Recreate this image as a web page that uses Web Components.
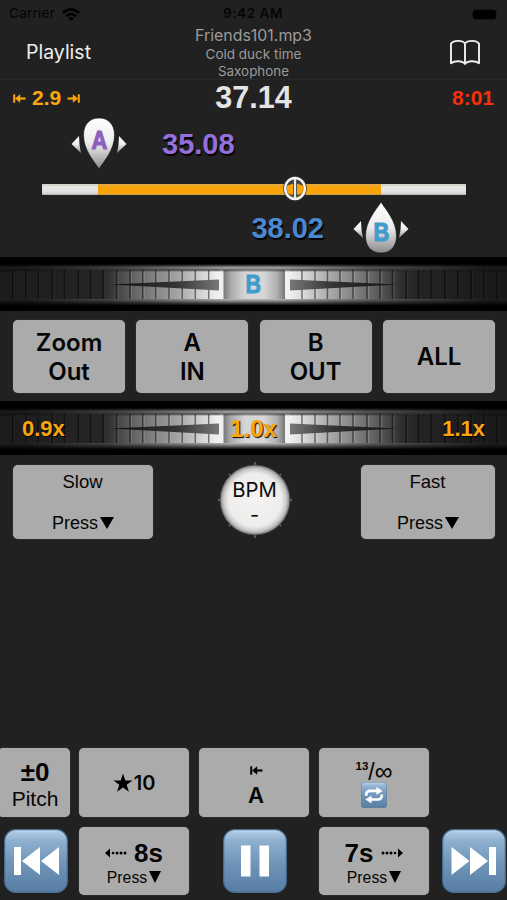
<!DOCTYPE html>
<html lang="en"><head><meta charset="utf-8"><title>Playlist</title>
<style>
html,body{margin:0;background:#212121}
body{width:507px;height:900px;overflow:hidden}
</style></head><body>
<music-player></music-player>
<script>
const define=(name,html)=>customElements.define(name,class extends HTMLElement{
  connectedCallback(){
    if(this.shadowRoot)return;
    const t=document.createElement('template');
    t.innerHTML=typeof html==='function'?html(this):html;
    this.attachShadow({mode:'open'}).append(t.content.cloneNode(true));
  }
});

/* A line of text with its own size, weight and tracking */
define('text-line',el=>`<style>
:host{display:block;white-space:pre;line-height:1;text-align:center;
font-family:${el.hasAttribute('ui')?'Inter,':''}"Liberation Sans",sans-serif;
font-size:${el.getAttribute('size')}px;font-weight:${el.getAttribute('weight')||400};
letter-spacing:${el.getAttribute('track')||0}px}
</style><slot></slot>`);

define('status-bar',`<style>
:host{display:grid;grid-template-columns:1fr auto 1fr;align-items:center;height:27px;box-sizing:border-box;padding:1px 10px 0 9px;color:#050505}
.l{display:flex;align-items:center;gap:7px}.r{display:flex;justify-content:flex-end}
.bat{width:23px;height:9px;border-radius:3px;background:#000;box-shadow:0 0 2px #000;margin-right:1px}
</style><div class="l"><text-line ui size="13.6" track=".2">Carrier</text-line>
<svg width="18" height="13" viewBox="0 0 18 13"><g fill="none" stroke="#000" stroke-width="2.6"><path d="M1 5Q9-2.2 17 5"/><path d="M4 8.2Q9 3.8 14 8.2"/></g><path d="M9 13L6.2 10Q9 7.8 11.8 10Z"/></svg></div>
<text-line ui size="13.6" weight="600" track=".5">9:42 AM</text-line>
<div class="r"><div class="bat"></div></div>`);

define('nav-bar',`<style>
:host{display:grid;grid-template-columns:1fr auto 1fr;height:52px;border-bottom:1px solid #292929;color:#eee}
.play{justify-self:start;padding:16px 0 0 26px}
.mid{color:#9b9b9b;display:flex;flex-direction:column;align-items:center}
.mid text-line:nth-child(1){margin-top:1px}.mid text-line:nth-child(2){margin-top:4px}.mid text-line:nth-child(3){margin-top:4px}
.book{justify-self:end;padding:12px 26px 0 0}
</style><text-line class="play" ui size="19.5">Playlist</text-line>
<div class="mid"><text-line ui size="15.9">Friends101.mp3</text-line><text-line ui size="13.5">Cold duck time</text-line><text-line ui size="13.4">Saxophone</text-line></div>
<svg class="book" width="32" height="27" viewBox="0 0 32 27" fill="none" stroke="#f0f0f0" stroke-width="1.9" stroke-linejoin="round"><path d="M16 4.500C13.500 1.300 5 .8 2 4.500V24.200C5.500 21.500 13.500 21.500 16 25C18.500 21.500 26.500 21.500 30 24.200V4.500C27 .8 18.500 1.300 16 4.500ZM16 4.500V25"/></svg>`);

define('edge-arrow',el=>{const f=el.getAttribute('dir')==='right'?'transform="matrix(-1 0 0 1 13 0)"':'';
return `<style>:host{display:block}svg{display:block}</style><svg width="13" height="9" viewBox="0 0 13 9"><g ${f} fill="none" stroke="currentColor"><path d="M1.200.3V8.700" stroke-width="2"/><path d="M4 4.500H12.500" stroke-width="2.200"/><path d="M7.200.3L2 4.500L7.200 8.700Z" fill="currentColor" stroke="none"/></g></svg>`});

define('time-row',`<style>
:host{display:grid;grid-template-columns:1fr auto 1fr;align-items:center;height:36px;box-sizing:border-box;padding-bottom:2px}
.a{display:flex;align-items:center;gap:6px;color:#f9a60f;padding-left:13px}
.a edge-arrow{margin-top:3px}
.m{color:#e4e4e4}.r{color:#f5310d;justify-self:end;padding-right:13px}
</style><div class="a"><edge-arrow></edge-arrow><text-line size="21" weight="700">2.9</text-line><edge-arrow dir="right"></edge-arrow></div>
<text-line class="m" size="30.500" weight="700">37.14</text-line><text-line class="r" size="21" weight="700">8:01</text-line>`);

/* Drop-shaped loop marker; flip turns the tip upwards */
define('loop-pin',el=>{const up=el.hasAttribute('flip');return `<style>
:host{display:grid;width:56px;height:54px;place-items:center}
svg,text-line{grid-area:1/1}
text-line{color:${up?'#3f9ccb':'#8d60bd'};margin-top:${up?'8px':'-6px'};transform:scaleX(.84);-webkit-text-stroke:1.200px}
</style><svg width="56" height="54" viewBox="0 0 56 54"><defs><linearGradient id="g" x2="0" y2="1"><stop stop-color="#fff"/><stop offset=".5" stop-color="#ececec"/><stop offset="1" stop-color="#8a8a8a"/></linearGradient></defs>
<path fill="url(#g)" stroke="#111" stroke-width=".6" d="${up?'M28 1C33 9 43.500 20 43.500 35C43.500 46 37 52 28 52C19 52 12.500 46 12.500 35C12.500 20 23 9 28 1Z':'M28 53C33 45 43.500 34 43.500 19C43.500 8 37 2 28 2C19 2 12.500 8 12.500 19C12.500 34 23 45 28 53Z'}"/>
<path fill="url(#g)" d="M8 20L.5 28L10 37Q8 29 8 20ZM48 20L55.500 28L46 37Q48 29 48 20Z"/></svg><text-line size="26" weight="700">${up?'B':'A'}</text-line>`});

define('loop-slider',`<style>
:host{display:flex;flex-direction:column;height:142px}
.top{display:flex;padding-left:71px;height:68px;align-items:flex-start}
.top text-line{color:#9370db;margin:14px 0 0 35px;text-shadow:1px 2px 1px #000}
.track{margin:0 41px 0 42px;height:11px;display:grid;background:linear-gradient(90deg,transparent 13.200%,#faa307 13.200% 80%,transparent 80%),linear-gradient(#e8e8e8,#e4e4e4 60%,#cfcfcf);box-shadow:inset 0 2px 1px #bdb39566,inset 0 -1px 1px #9998}
.track svg{margin:-9px 0 0 240px}
.bot{display:flex;justify-content:flex-end;padding-right:98px}
.bot text-line{color:#4a88d1;margin:19px 29px 0 0;text-shadow:1px 2px 1px #000}
.bot loop-pin{margin-top:6px}
</style><div class="top"><loop-pin></loop-pin><text-line size="29" weight="700">35.08</text-line></div>
<div class="track"><svg width="26" height="27" viewBox="0 0 26 27"><ellipse cx="13" cy="13.500" rx="10" ry="11" fill="#faa307" stroke="#333" stroke-width="3.400"/><path d="M4.500 11Q8 3 13 3Q18 3 21.500 11Q17 8.500 13 8.500Q9 8.500 4.500 11ZM6 18.500Q13 21 20 18.500L13 24Z" fill="#444"/><ellipse cx="13" cy="13.500" rx="9.800" ry="10.600" fill="none" stroke="#f4f4f4" stroke-width="2.500"/><path d="M13 5V22" stroke="#555" stroke-width="4"/><path d="M13 4V23" stroke="#e8e8e8" stroke-width="2"/></svg></div>
<div class="bot"><text-line size="29" weight="700">38.02</text-line><loop-pin flip></loop-pin></div>`);

/* Ribbed thumb wheel with a lit centre */
define('jog-dial',()=>{
 const xs=[12.700,26,38.300,52,64.500,78.300,90.700,103,116.700,130,142.700,155.700,169,182.300,195.300,208.700,302,315,327.500,340,353,367,380,392.500,406,418.500,431.500,445,458,471,484,497];
 const ticks=xs.map(x=>{const lit=x>110&&x<395;return `<path d="M${x} 13V42" stroke="#050505" stroke-opacity="${lit?.5:.55}" stroke-width="1.500"/><path d="M${x+1.500} 14V42" stroke="#fff" stroke-opacity="${lit?.15:.03}"/>`}).join('');
 return `<style>
:host{display:grid;height:54px;grid-template-columns:100%}
svg,.lab{grid-area:1/1}svg{display:block}
.lab{display:grid;grid-template-columns:1fr 1fr 1fr;align-items:center;padding:2px 22px 0 22px}
</style><svg width="507" height="54" viewBox="0 0 507 54"><defs>
<linearGradient id="w" gradientUnits="userSpaceOnUse" x1="0" x2="507" y1="0" y2="0"><stop stop-color="#1b1b1b"/><stop offset=".2" stop-color="#262626"/><stop offset=".215" stop-color="#333"/><stop offset=".27" stop-color="#696969"/><stop offset=".35" stop-color="#a4a4a4"/><stop offset=".43" stop-color="#f2f2f2"/><stop offset=".57" stop-color="#f2f2f2"/><stop offset=".65" stop-color="#a9a9a9"/><stop offset=".73" stop-color="#696969"/><stop offset=".79" stop-color="#303030"/><stop offset=".83" stop-color="#232323"/><stop offset="1" stop-color="#181818"/></linearGradient>
<linearGradient id="h" x2="1" y2="0"><stop offset=".05" stop-color="#222"/><stop offset=".22" stop-color="#505050"/><stop offset=".45" stop-color="#c4c4c4"/><stop offset=".55" stop-color="#c4c4c4"/><stop offset=".75" stop-color="#606060"/><stop offset=".96" stop-color="#222"/></linearGradient>
<linearGradient id="v" x2="0" y2="1"><stop stop-color="#000"/><stop offset=".13" stop-color="#000"/><stop offset=".2" stop-color="#000" stop-opacity=".15"/><stop offset=".24" stop-color="#000" stop-opacity=".5"/><stop offset=".28" stop-color="#000" stop-opacity="0"/><stop offset=".77" stop-color="#000" stop-opacity="0"/><stop offset=".8" stop-color="#000" stop-opacity=".2"/><stop offset=".9" stop-color="#000"/></linearGradient>
<linearGradient id="c" x2="1" y2="0"><stop stop-color="#777"/><stop offset=".12" stop-color="#aaa"/><stop offset=".35" stop-color="#d6d6d6"/><stop offset=".65" stop-color="#d6d6d6"/><stop offset=".87" stop-color="#b0b0b0"/><stop offset="1" stop-color="#777"/></linearGradient>
<linearGradient id="a" x2="1" y2="0"><stop stop-color="#111"/><stop offset=".6" stop-color="#333"/><stop offset="1" stop-color="#777"/></linearGradient>
<linearGradient id="b" x2="1" y2="0"><stop stop-color="#777"/><stop offset=".4" stop-color="#333"/><stop offset="1" stop-color="#111"/></linearGradient></defs>
<rect width="507" height="54" fill="url(#h)"/><rect y="14" width="507" height="28" fill="url(#w)"/>${ticks}
<path d="M110 27.500L219 22.500V33.500Z" fill="url(#a)"/><path d="M397 27.500L290 22.500V33.500Z" fill="url(#b)"/>
<path d="M219.500 13H223.500V42H219.500ZM285 13H289.500V42H285Z" fill="#f0f0f0"/><rect x="223.500" y="13" width="61.500" height="29" fill="url(#c)"/>
<rect width="507" height="54" fill="url(#v)"/></svg><div class="lab"><slot name="l"><span></span></slot><slot name="c"></slot><slot name="r"></slot></div>`});

define('pad-button',`<style>
:host{display:flex;flex-direction:column;align-items:center;justify-content:center;background:#ababab;border-radius:5px;color:#050505;box-shadow:0 0 1px #777;box-sizing:border-box}
</style><slot></slot>`);

define('bpm-knob',`<style>
:host{display:grid;width:76px;height:78px}
svg,.t{grid-area:1/1}.t{display:flex;flex-direction:column;align-items:center;color:#0b0b0b;padding-top:19px;gap:5px}
</style><svg width="76" height="78" viewBox="0 0 76 78"><defs><radialGradient id="k"><stop stop-color="#f4f3f1"/><stop offset=".76" stop-color="#eeedec"/><stop offset=".9" stop-color="#c7c7c7"/><stop offset="1" stop-color="#777"/></radialGradient></defs>
<g stroke="#777" stroke-width="1.300"><path d="M38 1V77M1 39H75M12 13L64 65M64 13L12 65"/></g><circle cx="38" cy="39" r="35" fill="url(#k)" stroke="#444" stroke-width=".8"/></svg>
<div class="t"><text-line ui size="20.300">BPM</text-line><text-line ui size="20">-</text-line></div>`);

const art={
 prev:'<path d="M10 18H17V46H10ZM36 18V46L18 32ZM55 18V46L37 32Z"/>',
 next:'<path d="M54 18H47V46H54ZM28 18V46L46 32ZM9.500 18V46L27.500 32Z"/>',
 pause:'<path d="M18 16.500H27.500V47.500H18ZM36.500 16.500H46V47.500H36.500Z"/>',
 loop:'<path d="M13 34V31Q13 22 23 22H42" fill="none" stroke="#fff" stroke-width="6.500"/><path d="M38 12L53 22L38 32ZM26 33L11 43L26 53Z"/><path d="M51 31V34Q51 43 41 43H22" fill="none" stroke="#fff" stroke-width="6.500"/>'};
define('media-tile',el=>{const s=el.getAttribute('size')||64;return `<style>:host{display:block}svg{display:block}</style>
<svg width="${s}" height="${s}" viewBox="0 0 64 64"><defs><linearGradient id="t" x2="0" y2="1"><stop stop-color="#b5d0e8"/><stop offset=".18" stop-color="#8fb0cf"/><stop offset=".5" stop-color="#7297bb"/><stop offset="1" stop-color="#587da3"/></linearGradient></defs><rect x=".7" y=".7" width="62.600" height="62.600" rx="${s<40?7:11}" fill="url(#t)" stroke="#496e92" stroke-width="1.200"/><path d="M10 2.500H54" stroke="#c3dcf1" stroke-width="1.500" stroke-linecap="round" opacity=".5"/><g fill="#fff">${art[el.getAttribute('icon')]}</g></svg>`});

define('dotted-arrow',el=>`<style>:host{display:block}svg{display:block}</style><svg width="22" height="10" viewBox="0 0 22 10"><g ${el.getAttribute('dir')==='right'?'transform="matrix(-1 0 0 1 22 0)"':''}><path d="M0 5L5 .5V9.500Z"/><circle cx="8" cy="5" r="1.300"/><circle cx="12" cy="5" r="1.500"/><circle cx="16" cy="5" r="1.500"/><circle cx="20" cy="5" r="1.500"/></g></svg>`);

define('press-label',el=>`<style>:host{display:flex;align-items:center;line-height:1}svg{margin-left:2px}</style><text-line size="${el.getAttribute('size')}">Press</text-line><svg width="${el.getAttribute('tri')}" height="12" viewBox="0 0 14 12" preserveAspectRatio="none"><path d="M0 0H14L7 12Z"/></svg>`);

define('music-player',`<style>
:host{display:flex;flex-direction:column;width:507px;height:900px;background:#212121}
loop-slider{height:141px}
.four{display:grid;grid-template-columns:repeat(4,112px);justify-content:space-between;padding:9px 12px 8px 13px;height:73px}
.four pad-button{padding-top:1px}
.four text-line+text-line{margin-top:5px}
.two{display:flex;justify-content:space-between;align-items:flex-start;padding:10px 12px 0 13px}
.two pad-button{height:74px;padding-top:1px}.slow{width:140px}.fast{width:134px}
bpm-knob{margin:-4px 5px 0 0}
.c1{margin-bottom:23px;margin-right:1px}
.low{margin-top:auto;display:flex;gap:10px;height:69px;margin-bottom:10px}
.low pad-button{width:110px}
.low .pitch{width:70px;margin-right:-1px;border-radius:2px 5px 5px 2px;padding-top:2px}
.foot{display:flex;height:68px;margin-bottom:5px;padding:0 1px 0 4px}
.foot pad-button{width:110px;padding-top:3px}.foot press-label{margin-top:4px}
.foot media-tile{margin-top:2px}
.s1{flex:0 0 11px}.s2{flex:0 0 34px}.s3{flex:0 0 32px}.s4{flex:0 0 13px}
.row{display:flex;align-items:center}
.count{display:flex;align-items:center;height:22px}
</style>
<status-bar></status-bar><nav-bar></nav-bar><time-row></time-row><loop-slider></loop-slider>
<jog-dial><text-line slot="c" size="25" weight="700" style="color:#3f9ccb;-webkit-text-stroke:1px;transform:scaleX(.86);margin-top:-1px">B</text-line></jog-dial>
<div class="four">
<pad-button><text-line ui size="24" weight="600">Zoom</text-line><text-line ui size="24" weight="600">Out</text-line></pad-button>
<pad-button><text-line ui size="24" weight="600">A</text-line><text-line ui size="24" weight="600">IN</text-line></pad-button>
<pad-button><text-line ui size="24" weight="600">B</text-line><text-line ui size="24" weight="600">OUT</text-line></pad-button>
<pad-button><text-line ui size="24" weight="600">ALL</text-line></pad-button></div>
<jog-dial style="color:#faa610;text-shadow:1px 1px 1px #000"><text-line slot="l" size="22" weight="700" style="text-align:left">0.9x</text-line><text-line slot="c" size="24" weight="700">1.0x</text-line><text-line slot="r" size="22" weight="700" style="text-align:right">1.1x</text-line></jog-dial>
<div class="two"><pad-button class="slow"><text-line class="c1" size="18.500">Slow</text-line><press-label size="18" tri="14"></press-label></pad-button><bpm-knob></bpm-knob><pad-button class="fast"><text-line class="c1" size="18.500">Fast</text-line><press-label size="18" tri="14"></press-label></pad-button></div>
<div class="low">
<pad-button class="pitch"><text-line size="26" weight="700">±0</text-line><text-line size="21" style="margin-top:3px">Pitch</text-line></pad-button>
<pad-button><div class="row"><svg width="20" height="20" viewBox="0 0 20 20"><path d="M10 .5L12.300 7.400H19.600L13.700 11.700L15.900 18.700L10 14.400L4.100 18.700L6.300 11.700L.4 7.400H7.700Z"/></svg><text-line ui size="20" weight="600" style="margin-left:1px">10</text-line></div></pad-button>
<pad-button style="padding:7px 0 0 4px"><edge-arrow></edge-arrow><text-line ui size="22" weight="600" style="margin-top:9px">A</text-line></pad-button>
<pad-button style="padding-top:3px"><div class="count"><text-line size="11.500" weight="700" style="margin-top:-8px">13</text-line><text-line size="23" style="margin-top:2px">/</text-line><text-line size="25">∞</text-line></div><media-tile icon="loop" size="26"></media-tile></pad-button></div>
<div class="foot">
<media-tile icon="prev"></media-tile><span class="s1"></span>
<pad-button><div class="row" style="gap:7px"><dotted-arrow></dotted-arrow><text-line size="26" weight="700">8s</text-line></div><press-label size="15.800" tri="12"></press-label></pad-button><span class="s2"></span>
<media-tile icon="pause"></media-tile><span class="s3"></span>
<pad-button><div class="row" style="gap:8px"><text-line size="26" weight="700">7s</text-line><dotted-arrow dir="right"></dotted-arrow></div><press-label size="15.800" tri="12"></press-label></pad-button><span class="s4"></span>
<media-tile icon="next"></media-tile>
</div>`);
</script></body></html>
